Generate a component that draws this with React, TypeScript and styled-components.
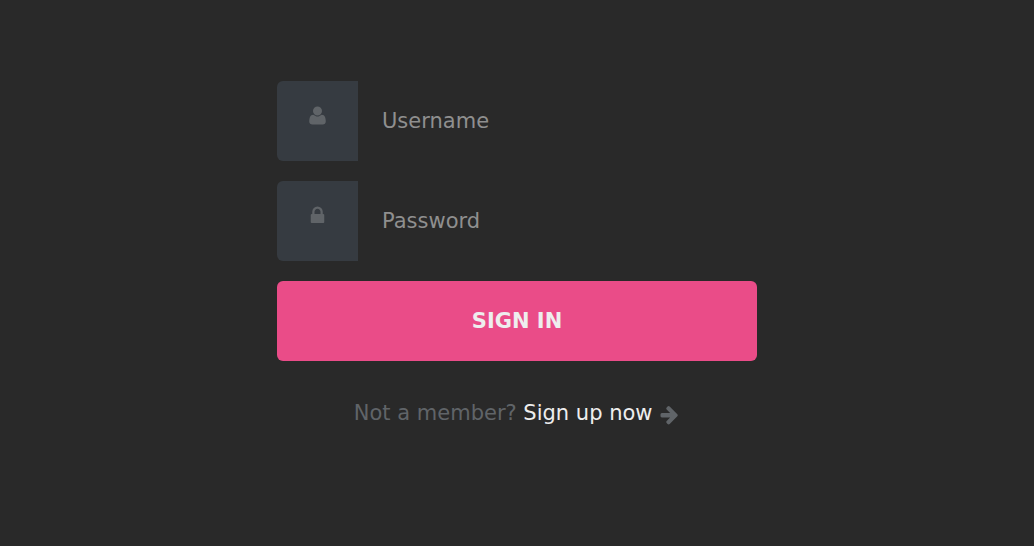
import React from "react";
import styled, { createGlobalStyle } from "styled-components";

const GlobalStyle = createGlobalStyle`
  *, *::before, *::after {
    box-sizing: border-box;
  }

  body {
    margin: 0;
    background: #292929;
    color: #606468;
    font-family: "DejaVu Sans", sans-serif;
    font-size: 21px;
    line-height: 32px;
  }
`;

const Page = styled.main`
  display: grid;
  align-content: center;
  justify-items: center;
  min-height: 100vh;
`;

const LoginForm = styled.form`
  display: flex;
  flex-direction: column;
  gap: 20px;
  width: 90%;
  max-width: 480px;
`;

const Field = styled.div`
  display: flex;
`;

const FieldLabel = styled.label`
  padding: 24px 30px;
  border-radius: 6px 0 0 6px;
  background: #363b41;
`;

const Icon = styled.svg`
  display: block;
  width: 21px;
  height: 21px;
  fill: #606468;
`;

const InlineIcon = styled(Icon)`
  display: inline-block;
  vertical-align: middle;
`;

const TextInput = styled.input`
  flex: 1;
  min-width: 0;
  height: 80px;
  padding: 24px;
  border: 0;
  border-radius: 0 6px 6px 0;
  outline: 0;
  background: transparent;
  color: #eeeeee;
  font: inherit;

  &::placeholder {
    color: #8f8f8f;
    opacity: 1;
  }
`;

const SubmitButton = styled.button`
  padding: 24px;
  border: 0;
  border-radius: 6px;
  background: #ea4c88;
  color: #eeeeee;
  font: inherit;
  font-weight: 700;
  text-transform: uppercase;
  cursor: pointer;
`;

const SignUp = styled.p`
  margin: 36px 0;
  text-align: center;
`;

const SignUpLink = styled.a`
  color: #eeeeee;
  text-decoration: none;
`;

export default function App() {
  return (
    <>
      <GlobalStyle />
      <Page>
        <LoginForm onSubmit={(event) => event.preventDefault()}>
          <Field>
            <FieldLabel htmlFor="username" aria-label="Username">
              <Icon viewBox="0 0 1792 1792" aria-hidden="true">
                <path d="M1600 1405q0 120-73 189.5t-194 69.5H459q-121 0-194-69.5T192 1405q0-53 3.5-103.5t14-109T236 1084t43-97.5 62-81 85.5-53.5T538 832q9 0 42 21.5t74.5 48 108 48T896 971t133.5-21.5 108-48 74.5-48 42-21.5q61 0 111.5 20t85.5 53.5 62 81 43 97.5 26.5 108.5 14 109 3.5 103.5zm-320-893q0 159-112.5 271.5T896 896 624.5 783.5 512 512t112.5-271.5T896 128t271.5 112.5T1280 512z" />
              </Icon>
            </FieldLabel>
            <TextInput id="username" type="text" name="username" placeholder="Username" required />
          </Field>
          <Field>
            <FieldLabel htmlFor="password" aria-label="Password">
              <Icon viewBox="0 0 1792 1792" aria-hidden="true">
                <path d="M640 768h512V576q0-106-75-181t-181-75-181 75-75 181v192zm832 96v576q0 40-28 68t-68 28H416q-40 0-68-28t-28-68V864q0-40 28-68t68-28h32V576q0-184 132-316t316-132 316 132 132 316v192h32q40 0 68 28t28 68z" />
              </Icon>
            </FieldLabel>
            <TextInput id="password" type="password" name="password" placeholder="Password" required />
          </Field>
          <SubmitButton type="submit">Sign In</SubmitButton>
        </LoginForm>
        <SignUp>
          Not a member? <SignUpLink href="#">Sign up now</SignUpLink>{" "}
          <InlineIcon viewBox="0 0 1792 1792" aria-hidden="true">
            <path d="M1600 960q0 54-37 91l-651 651q-39 37-91 37-51 0-90-37l-75-75q-38-38-38-91t38-91l293-293H245q-52 0-84.5-37.5T128 1024V896q0-53 32.5-90.5T245 768h704L656 474q-38-36-38-90t38-90l75-75q38-38 90-38 53 0 91 38l651 651q37 35 37 90z" />
          </InlineIcon>
        </SignUp>
      </Page>
    </>
  );
}
